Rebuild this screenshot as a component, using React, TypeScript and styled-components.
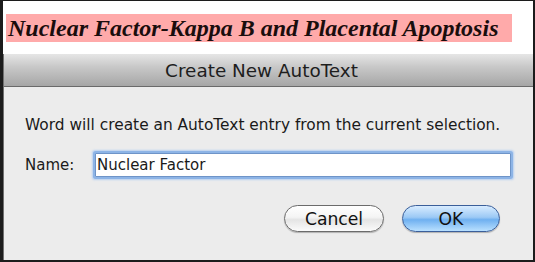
import styled, { createGlobalStyle } from "styled-components";

const Global = createGlobalStyle`
  html, body {
    margin: 0;
    padding: 0;
    background: #1c1c1c;
  }
`;

const Frame = styled.div`
  width: 535px;
  height: 262px;
  box-sizing: border-box;
  border-style: solid;
  border-color: #1c1c1c;
  border-width: 1px 2px 2px 3px;
  background: #ffffff;
  display: flex;
  flex-direction: column;
  overflow: hidden;
`;

const DocArea = styled.div`
  height: 53px;
  padding: 13px 0 0 3px;
  box-sizing: border-box;
`;

const Highlight = styled.span`
  display: inline-block;
  width: 506px;
  height: 28px;
  background: #ffaaaa;
  font-family: "Liberation Serif", "DejaVu Serif", serif;
  font-style: italic;
  font-weight: bold;
  font-size: 24px;
  line-height: 29px;
  color: #1a0d0d;
  padding-left: 2px;
  box-sizing: border-box;
  white-space: nowrap;
`;

const Dialog = styled.div`
  flex: 1;
  display: flex;
  flex-direction: column;
  background: #ececec;
  border-left: 1px solid #707070;
`;

const TitleBar = styled.div`
  height: 32px;
  background: linear-gradient(#e6e6e6, #c8c8c8 40%, #a6a6a6);
  border-bottom: 1px solid #6a6a6a;
  display: flex;
  align-items: center;
  justify-content: center;
  padding-right: 14px;
  font-family: "DejaVu Sans", "Open Sans", sans-serif;
  font-size: 18.4px;
  color: #1e1e1e;
`;

const Body = styled.div`
  flex: 1;
  display: flex;
  flex-direction: column;
  padding: 28px 20px 0 21px;
  font-family: "DejaVu Sans", "Open Sans", sans-serif;
  font-size: 15.4px;
  color: #1a1a1a;
`;

const Message = styled.div`
  height: 20px;
  line-height: 20px;
  white-space: nowrap;
`;

const Row = styled.div`
  display: flex;
  align-items: center;
  margin-top: 18px;
`;

const Label = styled.span`
  width: 70px;
  font-size: 15px;
`;

const Field = styled.div`
  width: 416px;
  height: 24px;
  background: #ffffff;
  border: 1px solid #6e94c8;
  box-shadow: 0 0 0 2px #8db4e6, 0 0 2px 3px #b8d0f0;
  border-radius: 1px;
  box-sizing: border-box;
  display: flex;
  align-items: center;
  padding-left: 1px;
  font-size: 15px;
`;

const Buttons = styled.div`
  display: flex;
  justify-content: flex-end;
  gap: 18px;
  margin-top: 28px;
  padding-right: 13px;
`;

const Button = styled.div<{ $primary?: boolean }>`
  width: ${(p) => (p.$primary ? 98 : 100)}px;
  height: 27px;
  border-radius: 14px;
  box-sizing: border-box;
  display: flex;
  align-items: center;
  justify-content: center;
  font-size: 17.2px;
  color: #111;
  border: 1px solid ${(p) => (p.$primary ? "#3b5f9a" : "#6b6b6b")};
  background: ${(p) =>
    p.$primary
      ? "linear-gradient(#d8ecff, #9cc9f5 45%, #6fb0f0 55%, #b9e0ff)"
      : "linear-gradient(#ffffff, #f4f4f4 45%, #e4e4e4 55%, #fbfbfb)"};
  box-shadow: 0 1px 1px rgba(0, 0, 0, 0.25);
`;

export default function App() {
  return (
    <>
      <Global />
      <Frame>
        <DocArea>
          <Highlight>Nuclear Factor-Kappa B and Placental Apoptosis</Highlight>
        </DocArea>
        <Dialog>
          <TitleBar>Create New AutoText</TitleBar>
          <Body>
            <Message>
              Word will create an AutoText entry from the current selection.
            </Message>
            <Row>
              <Label>Name:</Label>
              <Field>Nuclear Factor</Field>
            </Row>
            <Buttons>
              <Button>Cancel</Button>
              <Button $primary>OK</Button>
            </Buttons>
          </Body>
        </Dialog>
      </Frame>
    </>
  );
}
